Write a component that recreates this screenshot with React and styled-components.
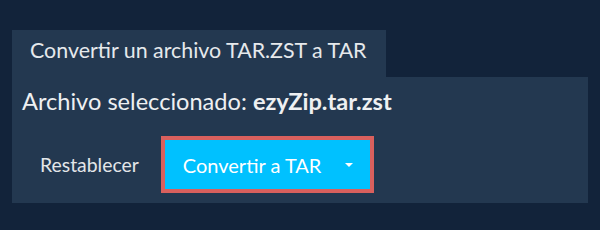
import React from "react";
import styled, { createGlobalStyle } from "styled-components";

const Global = createGlobalStyle`
  html, body { margin: 0; padding: 0; background: #12233a; }
  body { font-family: Lato, "Noto Sans", sans-serif; color: #e9ecef; }
`;

const Page = styled.div`
  width: 600px;
  height: 230px;
  box-sizing: border-box;
  padding: 30px 12px 0 12px;
  background: #12233a;
`;

const Tab = styled.div`
  display: inline-block;
  box-sizing: border-box;
  height: 47px;
  padding: 7px 19px 0 18px;
  background: #233850;
  font-size: 21.4px;
  line-height: 26px;
  color: #e6e9ec;
`;

const Panel = styled.div`
  background: #233850;
  padding: 10px 10px 10px 10px;
`;

const FileLine = styled.div`
  font-size: 23.6px;
  line-height: 29px;
  color: #eef0f2;
  b { font-weight: 700; }
`;

const Actions = styled.div`
  display: flex;
  align-items: center;
  margin-top: 20px;
  gap: 22px;
`;

const ResetButton = styled.button`
  background: transparent;
  border: none;
  font-family: inherit;
  font-size: 19.4px;
  color: #e3e6e9;
  padding: 0 0 0 18px;
  cursor: pointer;
`;

const SplitButton = styled.button`
  display: flex;
  align-items: center;
  box-sizing: border-box;
  width: 213px;
  height: 57px;
  border: 4px solid #d9605d;
  background: #00c1ff;
  color: #ffffff;
  font-family: inherit;
  font-size: 20px;
  padding: 0 0 0 18px;
  cursor: pointer;
`;

const Label = styled.span`
  flex: 1;
  text-align: left;
`;

const Caret = styled.span`
  width: 0;
  height: 0;
  border-left: 4px solid transparent;
  border-right: 4px solid transparent;
  border-top: 4px solid #ffffff;
  margin-right: 17px;
`;

export default function App() {
  return (
    <>
      <Global />
      <Page>
        <Tab>Convertir un archivo TAR.ZST a TAR</Tab>
        <Panel>
          <FileLine>
            Archivo seleccionado: <b>ezyZip.tar.zst</b>
          </FileLine>
          <Actions>
            <ResetButton>Restablecer</ResetButton>
            <SplitButton>
              <Label>Convertir a TAR</Label>
              <Caret />
            </SplitButton>
          </Actions>
        </Panel>
      </Page>
    </>
  );
}
